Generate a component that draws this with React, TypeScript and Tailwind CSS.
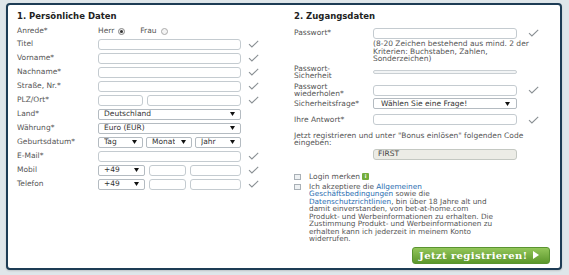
import React from "react";

const Check = () => (
  <svg width="11" height="8" viewBox="0 0 11 8" className="shrink-0">
    <path d="M1 4.2 L3.9 7 L10.2 0.8" fill="none" stroke="#8a9094" strokeWidth="1.1" />
  </svg>
);

const Arrow = () => (
  <svg width="5" height="4" viewBox="0 0 5 4" className="shrink-0">
    <path d="M0 0 L5 0 L2.5 4 Z" fill="#111" />
  </svg>
);

const Input = ({ w, className = "" }: { w: string; className?: string }) => (
  <div className={`${w} h-[11px] border border-[#c4cbd0] rounded-[3px] bg-white ${className}`} />
);

const Select = ({ w, text }: { w: string; text: string }) => (
  <div className={`${w} h-[11px] border border-[#b4bbc1] rounded-[2px] bg-white flex items-center justify-between pl-[5px] pr-[5px] overflow-hidden`}>
    <span className="whitespace-nowrap overflow-hidden text-[#333]">{text}</span>
    <Arrow />
  </div>
);

const LRow = ({ label, children, check = true }: { label: string; children: React.ReactNode; check?: boolean }) => (
  <div className="flex items-center h-[14px]">
    <div className="w-[81px] shrink-0 whitespace-nowrap">{label}</div>
    <div className="w-[143px] flex items-center gap-[4px]">{children}</div>
    {check && <div className="ml-[7px]"><Check /></div>}
  </div>
);

export default function App() {
  return (
    <div className="w-[569px] h-[275px] bg-[#dfe6ea] pt-[3px] pl-[6px] font-['DejaVu_Sans',sans-serif] text-[7.5px] text-[#555]">
      <div className="w-[556px] h-[267px] border-2 border-[#1d3c55] rounded-[4px] bg-white flex shadow-[0_1px_2px_rgba(0,0,0,0.15)]">
        {/* Left column */}
        <div className="w-[277px] pl-[9px] pt-[5px] flex flex-col">
          <div className="h-[12px] flex items-center font-bold text-[8.5px] text-[#222]">1. Persönliche Daten</div>
          <div className="mt-[3px] flex items-center h-[12px]">
            <div className="w-[81px]">Anrede*</div>
            <div className="flex items-center">
              <span>Herr</span>
              <span className="ml-[4px] w-[7px] h-[7px] rounded-full border border-[#888] bg-[#eee] flex items-center justify-center">
                <span className="w-[3px] h-[3px] rounded-full bg-[#333]" />
              </span>
              <span className="ml-[15px]">Frau</span>
              <span className="ml-[4px] w-[7px] h-[7px] rounded-full border border-[#aaa] bg-[#f4f4f4]" />
            </div>
          </div>
          <LRow label="Titel"><Input w="w-[143px]" /></LRow>
          <LRow label="Vorname*"><Input w="w-[143px]" /></LRow>
          <LRow label="Nachname*"><Input w="w-[143px]" /></LRow>
          <LRow label="Straße, Nr.*"><Input w="w-[143px]" /></LRow>
          <LRow label="PLZ/Ort*">
            <Input w="w-[45px]" />
            <Input w="w-[94px]" />
          </LRow>
          <LRow label="Land*" check={false}><Select w="w-[143px]" text="Deutschland" /></LRow>
          <LRow label="Währung*" check={false}><Select w="w-[143px]" text="Euro (EUR)" /></LRow>
          <LRow label="Geburtsdatum*" check={false}>
            <div className="flex gap-[3px]">
              <Select w="w-[45px]" text="Tag" />
              <Select w="w-[46px]" text="Monat" />
              <Select w="w-[46px]" text="Jahr" />
            </div>
          </LRow>
          <LRow label="E-Mail*"><Input w="w-[143px]" /></LRow>
          <LRow label="Mobil">
            <Select w="w-[47px]" text="+49" />
            <Input w="w-[37px]" />
            <Input w="w-[51px]" />
          </LRow>
          <LRow label="Telefon">
            <Select w="w-[47px]" text="+49" />
            <Input w="w-[37px]" />
            <Input w="w-[51px]" />
          </LRow>
        </div>

        {/* Right column */}
        <div className="flex-1 pl-[9px] pt-[5px] flex flex-col">
          <div className="h-[12px] flex items-center font-bold text-[8.5px] text-[#222]">2. Zugangsdaten</div>
          <div className="mt-[5px] flex items-center h-[12px]">
            <div className="w-[79px]">Passwort*</div>
            <Input w="w-[144px]" />
            <div className="ml-[11px]"><Check /></div>
          </div>
          <div className="pl-[79px] leading-[7.5px] mt-[1px] whitespace-nowrap">
            (8-20 Zeichen bestehend aus mind. 2 der<br />
            Kriterien: Buchstaben, Zahlen,<br />
            Sonderzeichen)
          </div>
          <div className="mt-[2px] flex items-center h-[15px]">
            <div className="w-[79px] leading-[7.5px]">Passwort-<br />Sicherheit</div>
            <div className="w-[144px] h-[4px] border border-[#c9cfd3] rounded-[2px] bg-[#f2f4f5]" />
          </div>
          <div className="mt-[3px] flex items-center h-[15px]">
            <div className="w-[79px] leading-[7.5px]">Passwort<br />wiederholen*</div>
            <Input w="w-[144px]" />
            <div className="ml-[11px]"><Check /></div>
          </div>
          <div className="flex items-center h-[12px]">
            <div className="w-[79px]">Sicherheitsfrage*</div>
            <div className="w-[144px] h-[11px] border border-[#b4bbc1] rounded-[2px] bg-white flex items-center justify-between pl-[7px] pr-[6px]">
              <span className="text-[#333]">Wählen Sie eine Frage!</span>
              <Arrow />
            </div>
          </div>
          <div className="mt-[4px] flex items-center h-[12px]">
            <div className="w-[79px]">Ihre Antwort*</div>
            <Input w="w-[144px]" />
            <div className="ml-[11px]"><Check /></div>
          </div>
          <div className="mt-[6px] leading-[7.5px] whitespace-nowrap">
            Jetzt registrieren und unter "Bonus einlösen" folgenden Code<br />
            eingeben:
          </div>
          <div className="mt-[2px] ml-[79px] w-[144px] h-[11px] border border-[#c4c8c2] rounded-[3px] bg-[#ecece6] flex items-center pl-[4px] text-[#444]">
            FIRST
          </div>
          <div className="mt-[12px] flex items-center h-[10px]">
            <span className="w-[7px] h-[6px] border border-[#a9b0b6] bg-[#eef1f3]" />
            <span className="ml-[8px]">Login merken</span>
            <span className="ml-[2px] w-[7px] h-[7px] bg-[#74ad3c] rounded-[1px] flex items-center justify-center text-white text-[5px] font-bold leading-none">i</span>
          </div>
          <div className="mt-[1px] flex items-start">
            <span className="mt-[1px] w-[7px] h-[6px] border border-[#a9b0b6] bg-[#eef1f3] shrink-0" />
            <div className="ml-[8px] leading-[7.5px] text-[7.3px] whitespace-nowrap">
              Ich akzeptiere die <span className="text-[#2a6db0]">Allgemeinen</span><br />
              <span className="text-[#2a6db0]">Geschäftsbedingungen</span> sowie die<br />
              <span className="text-[#2a6db0]">Datenschutzrichtlinien</span>, bin über 18 Jahre alt und<br />
              damit einverstanden, von bet-at-home.com<br />
              Produkt- und Werbeinformationen zu erhalten. Die<br />
              Zustimmung Produkt- und Werbeinformationen zu<br />
              erhalten kann ich jederzeit in meinem Konto<br />
              widerrufen.
            </div>
          </div>
          <div className="mt-[4px] ml-[118px] w-[138px] h-[17px] rounded-[3px] border border-[#5a9430] bg-gradient-to-b from-[#93c65a] to-[#5c972b] flex items-center pl-[6px] gap-[6px] text-white font-bold font-['DejaVu_Serif',serif] text-[10px] tracking-[0.4px]">
            <span className="whitespace-nowrap">Jetzt registrieren!</span>
            <svg width="6" height="8" viewBox="0 0 6 8" className="shrink-0"><path d="M0 0 L6 4 L0 8 Z" fill="#fff" /></svg>
          </div>
        </div>
      </div>
    </div>
  );
}
